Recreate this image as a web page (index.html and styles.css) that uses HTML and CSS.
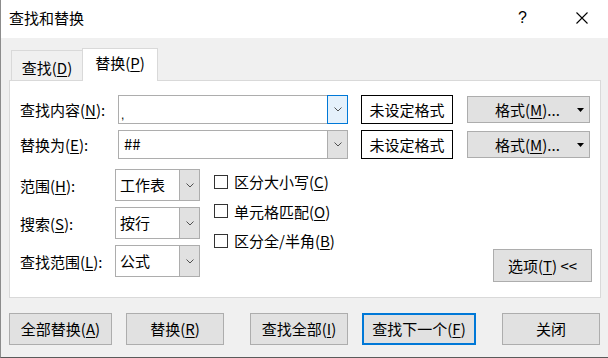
FILE: index.html
```html
<!DOCTYPE html>
<html lang="zh-CN">
<head>
  <meta charset="UTF-8">
  <title>查找和替换</title>
  <link rel="stylesheet" href="styles.css">
</head>
<body>
  <div class="window">
    <div class="titlebar">
      <span class="title">查找和替换</span>
      <span class="help">?</span>
      <span class="close">
        <svg viewBox="0 0 12 12" width="12" height="12"><path d="M0.5 0.5L11.5 11.5M11.5 0.5L0.5 11.5" stroke="#000" stroke-width="1.1" fill="none"/></svg>
      </span>
    </div>

    <div class="content">
      <div class="tabs">
        <div class="tab">查找(<u>D</u>)</div>
        <div class="tab active">替换(<u>P</u>)</div>
      </div>

      <div class="panel">
        <div class="find-row">
          <span class="field-label">查找内容(<u>N</u>):</span>
          <div class="combo combo-wide focused">
            <span class="combo-text cursor">,</span>
            <span class="drop">
              <svg viewBox="0 0 8 5" width="8" height="5"><path d="M0.5 0.5L4 4L7.5 0.5" stroke="#505050" fill="none"/></svg>
            </span>
          </div>
          <div class="format-box">未设定格式</div>
          <div class="btn format-btn">
            <span>格式(<u>M</u>)...</span>
            <svg viewBox="0 0 7 4" width="7" height="4"><path d="M0 0H7L3.5 4Z" fill="#000"/></svg>
          </div>
        </div>

        <div class="find-row">
          <span class="field-label">替换为(<u>E</u>):</span>
          <div class="combo combo-wide">
            <span class="combo-text">##</span>
            <span class="drop">
              <svg viewBox="0 0 8 5" width="8" height="5"><path d="M0.5 0.5L4 4L7.5 0.5" stroke="#505050" fill="none"/></svg>
            </span>
          </div>
          <div class="format-box">未设定格式</div>
          <div class="btn format-btn">
            <span>格式(<u>M</u>)...</span>
            <svg viewBox="0 0 7 4" width="7" height="4"><path d="M0 0H7L3.5 4Z" fill="#000"/></svg>
          </div>
        </div>

        <div class="options">
          <div class="option-fields">
            <div class="option-row">
              <span class="option-label">范围(<u>H</u>):</span>
              <div class="combo combo-small">
                <span class="combo-text">工作表</span>
                <span class="drop">
                  <svg viewBox="0 0 8 5" width="8" height="5"><path d="M0.5 0.5L4 4L7.5 0.5" stroke="#505050" fill="none"/></svg>
                </span>
              </div>
            </div>
            <div class="option-row">
              <span class="option-label">搜索(<u>S</u>):</span>
              <div class="combo combo-small">
                <span class="combo-text">按行</span>
                <span class="drop">
                  <svg viewBox="0 0 8 5" width="8" height="5"><path d="M0.5 0.5L4 4L7.5 0.5" stroke="#505050" fill="none"/></svg>
                </span>
              </div>
            </div>
            <div class="option-row">
              <span class="option-label">查找范围(<u>L</u>):</span>
              <div class="combo combo-small">
                <span class="combo-text">公式</span>
                <span class="drop">
                  <svg viewBox="0 0 8 5" width="8" height="5"><path d="M0.5 0.5L4 4L7.5 0.5" stroke="#505050" fill="none"/></svg>
                </span>
              </div>
            </div>
          </div>

          <div class="checks">
            <label class="check"><span class="box"></span>区分大小写(<u>C</u>)</label>
            <label class="check"><span class="box"></span>单元格匹配(<u>O</u>)</label>
            <label class="check"><span class="box"></span>区分全/半角(<u>B</u>)</label>
          </div>

          <div class="btn options-btn">选项(<u>T</u>) &lt;&lt;</div>
        </div>
      </div>

      <div class="actions">
        <div class="btn action-btn replace-all">全部替换(<u>A</u>)</div>
        <div class="btn action-btn">替换(<u>R</u>)</div>
        <div class="btn action-btn spaced">查找全部(<u>I</u>)</div>
        <div class="btn action-btn default find-next">查找下一个(<u>F</u>)</div>
        <div class="btn action-btn spaced">关闭</div>
      </div>
    </div>
  </div>
</body>
</html>
```

FILE: styles.css
```css
* {
  margin: 0;
  padding: 0;
  box-sizing: border-box;
}

body {
  font-family: "Noto Sans CJK SC", "Noto Sans", sans-serif;
  font-size: 15px;
  color: #000;
  background-color: #f0f0f0;
  width: 608px;
  height: 358px;
  overflow: hidden;
}

u {
  text-decoration-thickness: 1px;
  text-underline-offset: 2px;
}

.window {
  height: 358px;
  border-left: 1px solid #8c8c8c;
  border-bottom: 1px solid #5a5a5a;
}

/* title bar */
.titlebar {
  height: 38px;
  background-color: #fff;
  display: flex;
  align-items: center;
  padding-left: 8px;
  padding-bottom: 3px;
  line-height: 20px;
}

.title {
  flex: 1;
}

.help {
  font-family: "Liberation Sans", sans-serif;
  font-size: 16px;
  width: 12px;
  margin-right: 46px;
}

.close {
  display: flex;
  width: 12px;
  margin-right: 20px;
}

/* tabs */
.content {
  padding-left: 8px;
}

.tabs {
  height: 42px;
  display: flex;
  align-items: flex-end;
  padding-left: 2px;
}

.tab {
  height: 30px;
  width: 71px;
  line-height: 30px;
  padding-top: 2px;
  text-align: center;
  border-top: 1px solid #d9d9d9;
  border-left: 1px solid #d9d9d9;
}

.tab.active {
  height: 33px;
  width: 76px;
  margin-bottom: -1px;
  line-height: 28px;
  padding-top: 0;
  background-color: #fff;
  border-right: 1px solid #d9d9d9;
  position: relative;
  z-index: 1;
}

/* panel */
.panel {
  width: 592px;
  height: 218px;
  background-color: #fff;
  border: 1px solid #d9d9d9;
  padding: 14px 0 0 10px;
}

.find-row {
  display: flex;
  align-items: center;
  height: 29px;
  margin-bottom: 6px;
}

.field-label {
  width: 98px;
  line-height: 20px;
}

.combo {
  display: flex;
  height: 100%;
  border: 1px solid #adadad;
  background-color: #fff;
}

.combo-wide {
  width: 230px;
}

.combo-text {
  flex: 1;
  padding-left: 5px;
  line-height: 26px;
}

.cursor {
  line-height: 14px;
  font-family: "Liberation Sans", sans-serif;
  font-size: 12px;
  padding-left: 2px;
  padding-bottom: 1px;
  display: flex;
  align-items: flex-end;
}

.drop {
  width: 21px;
  margin: -1px -1px -1px 0;
  display: flex;
  align-items: center;
  justify-content: center;
  background-color: #e1e1e1;
  border: 1px solid #adadad;
}

.focused .drop {
  background-color: #e5f1fb;
  border-color: #0078d7;
}

.format-box {
  width: 92px;
  height: 100%;
  margin-left: 13px;
  border: 1px solid #000;
  text-align: center;
  line-height: 27px;
}

.btn {
  background-color: #e1e1e1;
  border: 1px solid #adadad;
  text-align: center;
}

.format-btn {
  width: 123px;
  height: 27px;
  margin-left: 14px;
  display: flex;
  align-items: center;
  padding: 0 5px 0 27px;
  justify-content: space-between;
}

/* options */
.options {
  display: flex;
  margin-top: 8px;
}

.option-fields {
  padding-top: 2px;
}

.option-row {
  display: flex;
  align-items: center;
  height: 32px;
  margin-bottom: 6px;
}

.option-label {
  width: 95px;
}

.combo-small {
  width: 85px;
}

.combo-small .combo-text {
  line-height: 30px;
  padding-left: 4px;
}

.checks {
  display: flex;
  flex-direction: column;
  margin-left: 14px;
}

.check {
  display: flex;
  align-items: center;
  height: 29.5px;
}

.box {
  width: 14px;
  height: 14px;
  border: 1px solid #333;
  background-color: #fff;
  margin-right: 6px;
}

.options-btn {
  width: 99px;
  height: 33px;
  line-height: 31px;
  align-self: flex-end;
  margin-left: auto;
  margin-right: 8px;
  margin-bottom: 1px;
}

/* bottom buttons */
.actions {
  display: flex;
  margin-top: 15px;
  gap: 14px;
}

.action-btn {
  width: 98px;
  height: 32px;
  line-height: 30px;
}

.replace-all {
  width: 103px;
}

.find-next {
  width: 114px;
}

.spaced {
  margin-left: 12px;
}

.default {
  border: 2px solid #0078d7;
  line-height: 28px;
}
```
